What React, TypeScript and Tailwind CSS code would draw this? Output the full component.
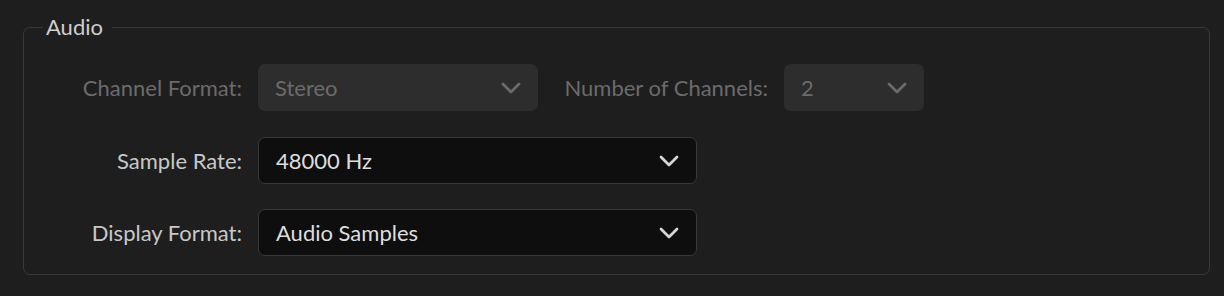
type Row = {
  label: string;
  value: string;
  width: string;
  gap: string;
};

function Chevron({ disabled }: { disabled?: boolean }) {
  return (
    <svg
      width="20"
      height="12"
      viewBox="0 0 20 12"
      fill="none"
      className={disabled ? 'text-[#6b6b6b]' : 'text-[#d4d4d4]'}
    >
      <path d="M2 2L10 10L18 2" stroke="currentColor" strokeWidth="2.8" strokeLinecap="round" strokeLinejoin="round" />
    </svg>
  );
}

function Select({ value, width, disabled }: { value: string; width: string; disabled?: boolean }) {
  return (
    <div
      className={`${width} h-[47px] shrink-0 flex items-center justify-between pl-[17px] pr-[17px] rounded-[7px] ${
        disabled ? 'bg-[#2d2d2d] text-[#6b6b6b]' : 'bg-[#0e0e0e] border border-[#383838] text-[#dedede]'
      }`}
    >
      <span>{value}</span>
      <Chevron disabled={disabled} />
    </div>
  );
}

function Label({ text, disabled, className = '' }: { text: string; disabled?: boolean; className?: string }) {
  return (
    <span className={`${className} ${disabled ? 'text-[#6b6b6b]' : 'text-[#c8c8c8]'}`}>{text}</span>
  );
}

export default function App() {
  const rows: Row[] = [
    { label: 'Sample Rate:', value: '48000 Hz', width: 'w-[439px]', gap: 'mt-[26px]' },
    { label: 'Display Format:', value: 'Audio Samples', width: 'w-[439px]', gap: 'mt-[25px]' }
  ];

  return (
    <div className="w-[1224px] h-[296px] bg-[#1e1e1e] pt-[14px] pl-[23px] pr-[14px] font-['Lato',sans-serif] text-[22px]">
      <fieldset className="border border-[#383838] rounded-[7px] pb-[18px]">
        <legend className="ml-[19px] pl-[3px] pr-[9px] text-[22px] leading-[26px] text-[#cfcfcf]">Audio</legend>

        <div className="flex flex-col pt-[24px]">
          {/* Channel row (disabled) */}
          <div className="flex items-center">
            <Label text="Channel Format:" disabled className="w-[218px] shrink-0 text-right" />
            <div className="ml-[16px]">
              <Select value="Stereo" width="w-[280px]" disabled />
            </div>
            <Label text="Number of Channels:" disabled className="ml-[24px] w-[206px] shrink-0 text-right" />
            <div className="ml-[16px]">
              <Select value="2" width="w-[140px]" disabled />
            </div>
          </div>

          {rows.map((row) => (
            <div key={row.label} className={`flex items-center ${row.gap}`}>
              <Label text={row.label} className="w-[218px] shrink-0 text-right" />
              <div className="ml-[16px]">
                <Select value={row.value} width={row.width} />
              </div>
            </div>
          ))}
        </div>
      </fieldset>
    </div>
  );
}
